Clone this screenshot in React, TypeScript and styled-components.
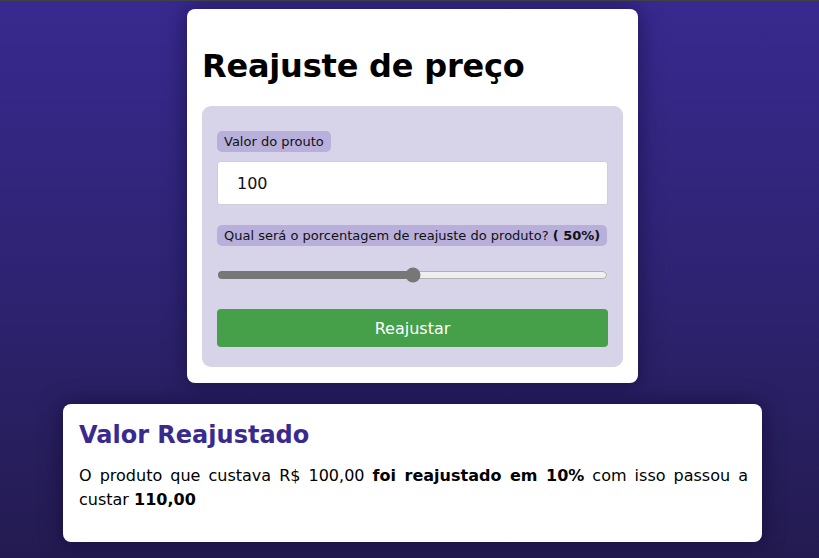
import React, { useState } from "react";
import styled, { createGlobalStyle } from "styled-components";

const GlobalStyle = createGlobalStyle`
  html, body { margin: 0; padding: 0; }
  body {
    min-height: 100vh;
    border-top: 1px solid #3f3f46;
    box-sizing: border-box;
    background: linear-gradient(to bottom, #38298f 0%, #2e2372 50%, #231b50 100%);
    font-family: "DejaVu Sans", Verdana, sans-serif;
  }
`;

const Page = styled.div`
  display: flex;
  flex-direction: column;
  align-items: center;
  padding: 8px 0 16px 6px;
  gap: 21px;
`;

const Card = styled.section`
  box-sizing: border-box;
  width: 451px;
  background: #ffffff;
  border-radius: 8px;
  padding: 15px 15px 16px;
  box-shadow: 0 0 22px rgba(10, 5, 40, 0.55);
`;

const Title = styled.h1`
  font-size: 32px;
  font-weight: bold;
  color: #000;
  letter-spacing: -0.2px;
  margin: 23px 0 21px 0;
  line-height: normal;
`;

const Panel = styled.div`
  display: flex;
  flex-direction: column;
  align-items: flex-start;
  background: #d7d3e9;
  border-radius: 9px;
  padding: 25px 15px 20px;
`;

const Label = styled.label<{ $mb: number }>`
  display: inline-block;
  background: #b8b0da;
  color: #111;
  font-size: 13px;
  line-height: 21px;
  padding: 0 7px;
  border-radius: 5px;
  margin-bottom: ${(p) => p.$mb}px;
`;

const TextInput = styled.input`
  box-sizing: border-box;
  width: 100%;
  height: 44px;
  border: 1px solid #cfcfd6;
  border-radius: 3px;
  background: #fff;
  padding: 0 19px;
  font-family: "DejaVu Sans", Verdana, sans-serif;
  font-size: 16px;
  color: #111;
  margin: 0 0 20px;
  outline: none;
`;

const Range = styled.input`
  width: 100%;
  margin: 0 0 26px;
  height: 16px;
  accent-color: #777777;
`;

const Button = styled.button`
  width: 100%;
  height: 38px;
  border: none;
  border-radius: 4px;
  background: #45a049;
  color: #fff;
  font-family: "DejaVu Sans", Verdana, sans-serif;
  font-size: 16px;
  cursor: pointer;
`;

const ResultCard = styled.section`
  box-sizing: border-box;
  width: 699px;
  background: #ffffff;
  border-radius: 8px;
  padding: 17px 14px 14px 16px;
  box-shadow: 0 0 22px rgba(10, 5, 40, 0.55);
`;

const ResultTitle = styled.h2`
  margin: 0;
  font-size: 24px;
  font-weight: bold;
  color: #3a2a8f;
  line-height: 28px;
`;

const ResultText = styled.p`
  margin: 15px 0 16px;
  font-size: 16px;
  line-height: 24px;
  text-align: justify;
  color: #000;
`;

export default function App() {
  const [valor, setValor] = useState("100");
  const [pct, setPct] = useState(50);
  return (
    <>
      <GlobalStyle />
      <Page>
        <Card>
          <Title>Reajuste de preço</Title>
          <Panel>
            <Label $mb={9}>Valor do prouto</Label>
            <TextInput value={valor} onChange={(e) => setValor(e.target.value)} />
            <Label $mb={21}>
              Qual será o porcentagem de reajuste do produto? <b>( {pct}%)</b>
            </Label>
            <Range
              type="range"
              min={0}
              max={100}
              value={pct}
              onChange={(e) => setPct(Number(e.target.value))}
            />
            <Button>Reajustar</Button>
          </Panel>
        </Card>
        <ResultCard>
          <ResultTitle>Valor Reajustado</ResultTitle>
          <ResultText>
            O produto que custava R$ 100,00 <b>foi reajustado em 10%</b> com isso passou a
            custar <b>110,00</b>
          </ResultText>
        </ResultCard>
      </Page>
    </>
  );
}
